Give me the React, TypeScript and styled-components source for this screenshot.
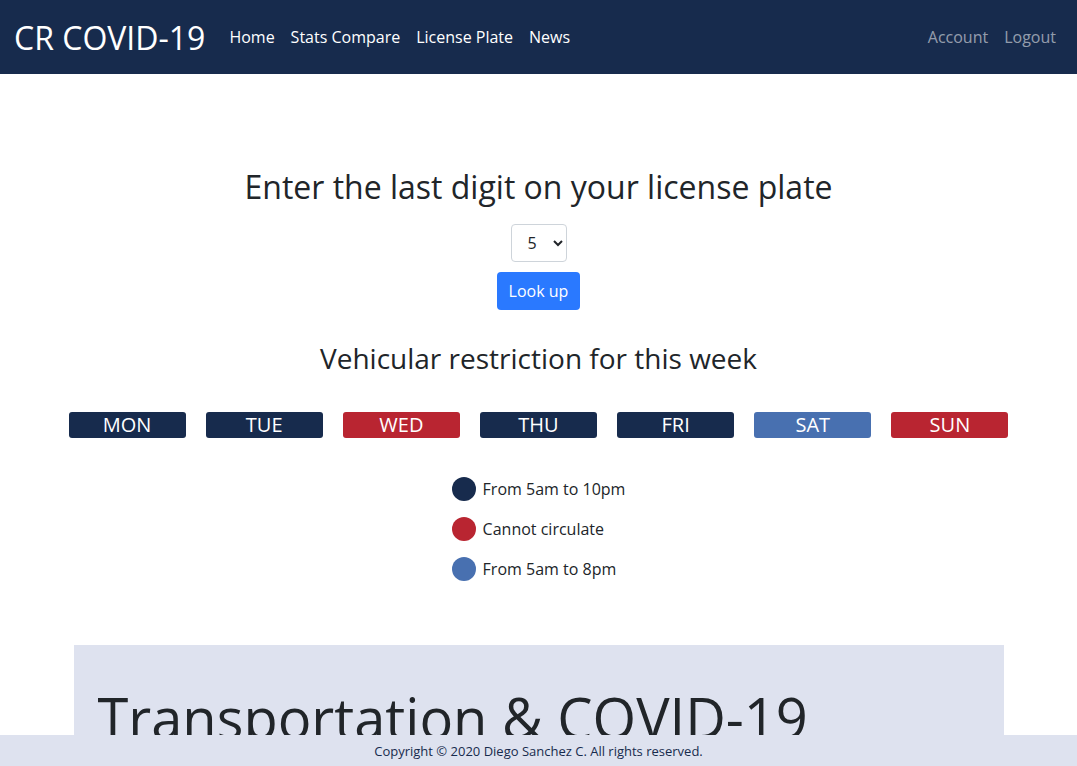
import React from "react";
import styled, { createGlobalStyle } from "styled-components";

const Global = createGlobalStyle`
  html, body { margin: 0; padding: 0; }
  body {
    font-family: "Open Sans", "Noto Sans", sans-serif;
    color: #212529;
    background: #fff;
    overflow: hidden;
  }
  * { box-sizing: border-box; }
`;

const Nav = styled.nav`
  height: 74px;
  background: #172b4d;
  display: flex;
  align-items: center;
  padding: 0 21px 0 14px;
`;

const Brand = styled.a`
  font-size: 32px;
  color: #fff;
  margin-right: 24px;
  text-decoration: none;
`;

const NavLinks = styled.div<{ $grow?: boolean }>`
  display: flex;
  gap: 16px;
  flex: ${(p) => (p.$grow ? 1 : "none")};
`;

const NavLink = styled.a<{ $muted?: boolean }>`
  font-size: 16px;
  color: ${(p) => (p.$muted ? "rgba(255,255,255,0.55)" : "#fff")};
  text-decoration: none;
`;

const Main = styled.main`
  width: 960px;
  margin: 0 auto;
  padding: 0 15px;
  display: flex;
  flex-direction: column;
  align-items: center;
`;

const Title = styled.h2<{ $top: number; $size: number }>`
  font-size: ${(p) => p.$size}px;
  font-weight: 400;
  line-height: 1.2;
  margin: ${(p) => p.$top}px 0 0;
  text-align: center;
`;

const Select = styled.select`
  margin-top: 18px;
  width: 56px;
  height: 38px;
  font-family: inherit;
  font-size: 16px;
  color: #212529;
  border: 1px solid #ced4da;
  border-radius: 4px;
  background: #fff;
  padding: 0 6px 0 12px;
`;

const Button = styled.button`
  margin-top: 10px;
  height: 38px;
  padding: 0 12px;
  background: #2a79ff;
  color: #fff;
  border: none;
  border-radius: 4px;
  font-family: inherit;
  font-size: 16px;
`;

const Days = styled.div`
  margin-top: 36px;
  width: 960px;
  display: grid;
  grid-template-columns: repeat(7, 1fr);
`;

const DayCell = styled.div`
  padding: 0 10px;
`;

const Day = styled.div<{ $bg: string }>`
  height: 26px;
  border-radius: 3px;
  background: ${(p) => p.$bg};
  color: #fff;
  font-size: 20px;
  line-height: 26px;
  text-align: center;
`;

const Legend = styled.div`
  margin-top: 39px;
  display: flex;
  flex-direction: column;
  gap: 16px;
`;

const LegendRow = styled.div`
  display: flex;
  align-items: center;
  gap: 7px;
  font-size: 16px;
  height: 24px;
`;

const Dot = styled.span<{ $bg: string }>`
  width: 24px;
  height: 24px;
  border-radius: 50%;
  background: ${(p) => p.$bg};
`;

const Jumbo = styled.section`
  margin-top: 64px;
  width: 930px;
  background: #dee2ef;
  padding: 39px 24px 40px;
`;

const JumboTitle = styled.h1`
  margin: 0;
  font-size: 56px;
  font-weight: 400;
  line-height: 1.2;
`;

const Footer = styled.footer`
  position: fixed;
  left: 0;
  right: 0;
  bottom: 0;
  height: 31px;
  background: #dee2ef;
  display: flex;
  align-items: center;
  justify-content: center;
  font-size: 13px;
  color: #172b4d;
`;

const NAVY = "#172b4d";
const RED = "#b92531";
const BLUE = "#4870b0";

const days: [string, string][] = [
  ["MON", NAVY],
  ["TUE", NAVY],
  ["WED", RED],
  ["THU", NAVY],
  ["FRI", NAVY],
  ["SAT", BLUE],
  ["SUN", RED],
];

export default function App() {
  return (
    <>
      <Global />
      <Nav>
        <Brand href="#">CR COVID-19</Brand>
        <NavLinks $grow>
          <NavLink href="#">Home</NavLink>
          <NavLink href="#">Stats Compare</NavLink>
          <NavLink href="#">License Plate</NavLink>
          <NavLink href="#">News</NavLink>
        </NavLinks>
        <NavLinks>
          <NavLink $muted href="#">Account</NavLink>
          <NavLink $muted href="#">Logout</NavLink>
        </NavLinks>
      </Nav>
      <Main>
        <Title $top={94} $size={32}>Enter the last digit on your license plate</Title>
        <Select defaultValue="5">
          {[0, 1, 2, 3, 4, 5, 6, 7, 8, 9].map((n) => (
            <option key={n} value={String(n)}>
              {n}
            </option>
          ))}
        </Select>
        <Button>Look up</Button>
        <Title $top={32} $size={28}>Vehicular restriction for this week</Title>
        <Days>
          {days.map(([d, c]) => (
            <DayCell key={d}>
              <Day $bg={c}>{d}</Day>
            </DayCell>
          ))}
        </Days>
        <Legend>
          <LegendRow>
            <Dot $bg={NAVY} />
            From 5am to 10pm
          </LegendRow>
          <LegendRow>
            <Dot $bg={RED} />
            Cannot circulate
          </LegendRow>
          <LegendRow>
            <Dot $bg={BLUE} />
            From 5am to 8pm
          </LegendRow>
        </Legend>
        <Jumbo>
          <JumboTitle>Transportation &amp; COVID-19</JumboTitle>
        </Jumbo>
      </Main>
      <Footer>Copyright © 2020 Diego Sanchez C. All rights reserved.</Footer>
    </>
  );
}
